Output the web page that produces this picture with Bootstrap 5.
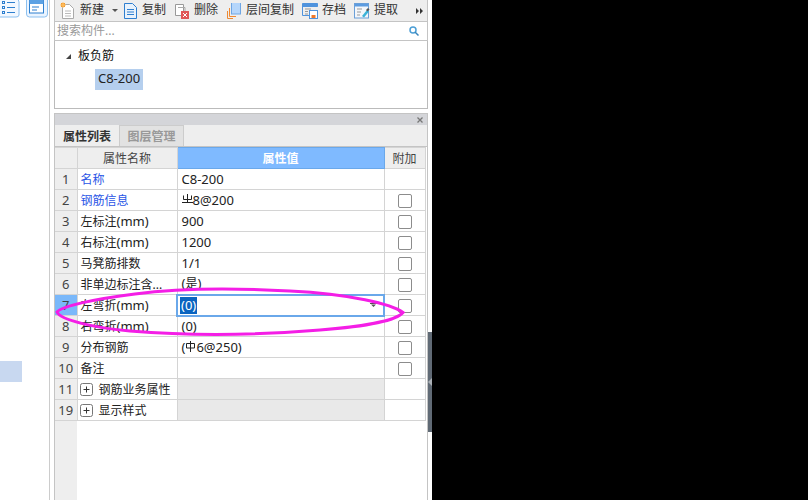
<!DOCTYPE html>
<html lang="zh"><head><meta charset="utf-8"><title>属性列表</title>
<link href="https://cdn.jsdelivr.net/npm/bootstrap@5.3.0/dist/css/bootstrap.min.css" rel="stylesheet">
<style>
html,body{height:500px;overflow:hidden}
body{background:#000;font-family:"Noto Sans","Noto Sans CJK SC",sans-serif;font-size:12px;color:#222;line-height:1.2}
.shell{width:432px;height:500px;background:#fff;position:relative;overflow:hidden}
.leftpane{width:50px;border-right:1px solid #ccc;flex:none}
.lefticons{gap:6px;height:18px}
.ticon{height:18px;display:block;flex:none}
.leftsel{width:22px;height:21px;background:#c8d8f0;margin-top:343px}
.mainp{width:374px;margin-left:4px;flex:none}
.toolb{height:22px;background:#eee;border:1px solid #c4c4c4;border-width:0 1px 1px;padding-left:5px}
.tbtn{font-size:12px;color:#333;white-space:nowrap}
.tbtn svg{display:block;flex:none}
.searchb{height:19px;border:1px solid #c4c4c4;border-width:0 1px 1px;padding:0 8px 0 2px;color:#999;font-size:12px}
.treeb{height:68px;border:1px solid #bbb;border-width:0 1px 1px;padding:0 0 0 10px}
.treerow{height:28px;gap:6px;font-size:12px;color:#111;padding-top:2px}
.treesel{margin-left:30px;width:48px;height:21px;background:#b5cfee;font-size:13px;color:#222;padding-bottom:1px}
.propp{margin-top:4px;border:1px solid #c4c4c4;border-bottom:0;height:388px;position:relative}
.titleb{height:11px;background:#d4d5d9;justify-content:flex-end;padding-right:4px}
.tabsb{height:22px;background:#eee;border-bottom:1px solid #c4c4c4}
.tabon{width:64px;font-weight:700;font-size:12px;color:#333;padding-top:3px}
.taboff{width:65px;background:#e2e2e2;border:1px solid #ccc;border-bottom:0;color:#999;font-weight:700;padding-top:3px}
.gutterbg{position:absolute;left:0;top:33px;bottom:0;width:22px;background:#eee}
.ptable{position:relative;table-layout:fixed;border-collapse:collapse;width:370px;font-size:12px}
.ptable td,.ptable th{height:21px;padding:1px 3px 0;border:1px solid #d4d4d4;vertical-align:middle;white-space:nowrap;overflow:hidden;font-weight:400;color:#222}
.ptable tr>:first-child{border-left:0}
.ptable thead th{background:#eee;text-align:center;color:#444;padding-top:2px}
.ptable thead th.valh{background:#7fbaff;border:1px solid #6aa8ea;color:#fff;font-weight:700}
.ptable td.gut{background:#eee;text-align:center;font-size:13px;color:#444;padding:1px 0 0}
.ptable td.gutcur{background:#7ab8fa}
.ptable td.namec{padding-left:3px;padding-top:2px}
.ptable td.groupc{padding-left:2px}
.ptable td.blue{color:#2a55e6}
.ptable td.val{font-size:13px;color:#222;padding-left:4px}
.ptable td.grey{background:#e9e9e9}
.ptable td.chk{text-align:center;padding:1px 0 0}
.cbx{display:block;width:14px;height:14px;margin:0 auto;border:1px solid #8c8c8c;border-radius:2px;background:#fff;float:none;appearance:none}
.ptable td.edit{padding:0;border:2px solid #6aa8ea}
.editin{height:17px;padding-left:2px;justify-content:space-between;padding-right:6px}
.seltx{background:#0a64c0;color:#fff;font-size:13px;line-height:17px;padding:0 1px}
.plusb{width:13px;height:13px;margin:0 6px 0 0;flex:none;display:block}
.rebar{display:inline-block;vertical-align:0;width:11px;height:11px}
.cjk12{font-size:12px}
.lat13{font-size:13px}
.scrollgrip{position:absolute;left:428px;top:332px;width:4px;height:100px;background:#606a75}
.gripdot{position:absolute;left:428px;top:378px}
.loop{position:absolute;left:0;top:0;pointer-events:none}
</style></head>
<body>
<div class="shell d-flex">
  <div class="leftpane">
    <div class="lefticons d-flex">
      <svg class="ticon" width="20" viewBox="0 0 20 18"><path d="M0 -1h16q3 0 3 3v13q0 2-3 2H0" fill="#f2f8ff" stroke="#8cc0ef"/><g fill="none" stroke="#2d7fcf"><rect x="2.500" y="1.500" width="2" height="2"/><rect x="2.500" y="6.500" width="2" height="2"/><rect x="2.500" y="11.500" width="2" height="2"/><path d="M7 2.500h8M7 7.500h8M7 12.500h8"/></g></svg>
      <svg class="ticon" width="22" viewBox="0 0 22 18"><rect x=".5" y="-3" width="21" height="20" rx="3" fill="#eaf4ff" stroke="#8cc0ef"/><rect x="3.500" y="-1" width="14" height="14" fill="#fff" stroke="#2d7fcf"/><rect x="3.500" y="-1" width="14" height="5" fill="#5da2e4"/><path d="M6 7h7M6 10h5" stroke="#2d7fcf"/></svg>
    </div>
    <div class="leftsel"></div>
  </div>
  <div class="mainp">
    <div class="toolb d-flex align-items-center">
      <div class="tbtn d-flex align-items-center"><svg width="16" height="18" viewBox="0 0 16 18"><path d="M2.500 2.500h7l4 4v10h-11z" fill="#fff" stroke="#aaa"/><path d="M5 9h6M5 11.500h6M5 14h6" stroke="#bbb"/><path d="M1 1h4v4H1z" fill="#f39a2d"/><path d="M0 3h6M3 0v6" stroke="#ffc56f"/></svg><span class="ms-1">新建</span><svg class="ms-2" width="6" height="4" viewBox="0 0 6 4"><path d="M0 0h6L3 3z" fill="#555"/></svg></div>
      <div class="tbtn d-flex align-items-center" style="margin-left:6px"><svg width="13" height="16" viewBox="0 0 13 16"><path d="M.5.500h8l4 4v11h-12z" fill="#e8f2fc" stroke="#2f7fd0"/><path d="M3 6.500h7M3 9h7M3 11.500h7" stroke="#2f7fd0"/></svg><span style="margin-left:5px">复制</span></div>
      <div class="tbtn d-flex align-items-center" style="margin-left:9px"><svg width="15" height="16" viewBox="0 0 15 16"><path d="M.5 1.500h8v11H.5z" fill="#fff" stroke="#999"/><path d="M3 4.500h7v10" fill="none" stroke="#aaa"/><rect x="6" y="8" width="8" height="8" fill="#e05757"/><path d="M8 10l4 4M12 10l-4 4" stroke="#fff"/></svg><span style="margin-left:4px">删除</span></div>
      <div class="tbtn d-flex align-items-center" style="margin-left:9px"><svg width="14" height="16" viewBox="0 0 14 16"><rect x="4.500" y="-1" width="9" height="12" fill="#b5d6fb" stroke="#6ea6e4"/><path d="M2.500 5v8.500H9M.5 8v7.500H6" fill="none" stroke="#ee8a34"/></svg><span style="margin-left:5px">层间复制</span></div>
      <div class="tbtn d-flex align-items-center" style="margin-left:8px"><svg width="16" height="16" viewBox="0 0 16 16"><path d="M.5.500h15v3H.5z" fill="#4f93dd" stroke="#4f93dd"/><path d="M.5 3v9.500H7" fill="none" stroke="#4f93dd"/><path d="M3 6h6M3 8.500h3M3 11h3" stroke="#999"/><rect x="7.500" y="7.500" width="8" height="8" fill="#fff" stroke="#4f93dd"/><rect x="9.500" y="12" width="4" height="3" fill="#f0782a"/></svg><span style="margin-left:4px">存档</span></div>
      <div class="tbtn d-flex align-items-center" style="margin-left:8px"><svg width="16" height="16" viewBox="0 0 16 16"><rect x=".5" y=".500" width="14" height="14.500" fill="#f3f6fa" stroke="#6a9fd8"/><rect x="1" y="1" width="13" height="2.500" fill="#5c9be0"/><path d="M3 6h5M3 9h4M3 12h3" stroke="#999"/><path d="M8 13l5-6 2 1.500-5 6z" fill="#3bb3d8"/><path d="M12 7l2-2 1.500 1.500-2 2z" fill="#555"/></svg><span style="margin-left:4px">提取</span></div>
      <svg class="ms-auto" style="margin-right:4px" width="7" height="6" viewBox="0 0 7 6"><path d="M0 0l3 3-3 3zM4 0l3 3-3 3z" fill="#333"/></svg>
    </div>
    <div class="searchb d-flex align-items-center justify-content-between"><span>搜索构件...</span><svg width="10" height="10" viewBox="0 0 10 10"><circle cx="4" cy="4" r="3" fill="none" stroke="#4d9fd6" stroke-width="1.500"/><path d="M6 6l3.500 3.500" stroke="#3a86bd" stroke-width="1.500"/></svg></div>
    <div class="treeb">
      <div class="treerow d-flex align-items-center"><svg width="7" height="7" viewBox="0 0 7 7"><path d="M6 1v5H1z" fill="#444"/></svg><span class="cjk12">板负筋</span></div>
      <div class="treesel d-flex align-items-center justify-content-center">C8-200</div>
    </div>
    <div class="propp">
      <div class="titleb d-flex align-items-center"><svg width="6" height="6" viewBox="0 0 6 6"><path d="M.5.500l5 5M5.500.500l-5 5" stroke="#777" stroke-width="1.300"/></svg></div>
      <div class="tabsb d-flex"><div class="tabon d-flex align-items-center justify-content-center">属性列表</div><div class="taboff d-flex align-items-center justify-content-center">图层管理</div></div>
      <div class="gutterbg"></div>
      <table class="ptable">
        <colgroup><col style="width:22px"><col style="width:100px"><col style="width:207px"><col style="width:41px"></colgroup>
        <thead><tr><th></th><th>属性名称</th><th class="valh">属性值</th><th>附加</th></tr></thead>
        <tbody>
          <tr><td class="gut">1</td><td class="namec blue">名称</td><td class="val">C8-200</td><td class="chk"></td></tr>
          <tr><td class="gut">2</td><td class="namec blue">钢筋信息</td><td class="val"><svg class="rebar" viewBox="0 0 11 11"><path d="M5.500 0v8M1.500 1.500v4h8v-4M0 8.500h11" fill="none" stroke="#222"/></svg>8@200</td><td class="chk"><input class="cbx" type="checkbox" aria-label="附加"></td></tr>
          <tr><td class="gut">3</td><td class="namec">左标注<span class="lat13">(mm)</span></td><td class="val">900</td><td class="chk"><input class="cbx" type="checkbox" aria-label="附加"></td></tr>
          <tr><td class="gut">4</td><td class="namec">右标注<span class="lat13">(mm)</span></td><td class="val">1200</td><td class="chk"><input class="cbx" type="checkbox" aria-label="附加"></td></tr>
          <tr><td class="gut">5</td><td class="namec">马凳筋排数</td><td class="val">1/1</td><td class="chk"><input class="cbx" type="checkbox" aria-label="附加"></td></tr>
          <tr><td class="gut">6</td><td class="namec">非单边标注含...</td><td class="val">(<span class="cjk12">是</span>)</td><td class="chk"><input class="cbx" type="checkbox" aria-label="附加"></td></tr>
          <tr><td class="gut gutcur">7</td><td class="namec">左弯折<span class="lat13">(mm)</span></td><td class="edit"><div class="editin d-flex align-items-center"><span class="seltx">(0)</span><svg width="7" height="5" viewBox="0 0 7 5"><path d="M0 0h7v1H0zM1 1.500h5L3.500 4z" fill="#555"/></svg></div></td><td class="chk"><input class="cbx" type="checkbox" aria-label="附加"></td></tr>
          <tr><td class="gut">8</td><td class="namec">右弯折<span class="lat13">(mm)</span></td><td class="val">(0)</td><td class="chk"><input class="cbx" type="checkbox" aria-label="附加"></td></tr>
          <tr><td class="gut">9</td><td class="namec">分布钢筋</td><td class="val">(<svg class="rebar" viewBox="0 0 11 11"><path d="M5.500 0v11M1.500 2.500v4.500h8V2.500z" fill="none" stroke="#222"/></svg>6@250)</td><td class="chk"><input class="cbx" type="checkbox" aria-label="附加"></td></tr>
          <tr><td class="gut">10</td><td class="namec">备注</td><td class="val"></td><td class="chk"><input class="cbx" type="checkbox" aria-label="附加"></td></tr>
          <tr><td class="gut">11</td><td class="namec groupc"><div class="d-flex align-items-center"><svg class="plusb" viewBox="0 0 13 13"><rect x=".5" y=".500" width="12" height="12" rx="2" fill="#fff" stroke="#777"/><path d="M3.500 6.500h6M6.500 3.500v6" stroke="#333"/></svg>钢筋业务属性</div></td><td class="grey"></td><td class="chk"></td></tr>
          <tr><td class="gut">19</td><td class="namec groupc"><div class="d-flex align-items-center"><svg class="plusb" viewBox="0 0 13 13"><rect x=".5" y=".500" width="12" height="12" rx="2" fill="#fff" stroke="#777"/><path d="M3.500 6.500h6M6.500 3.500v6" stroke="#333"/></svg>显示样式</div></td><td class="grey"></td><td class="chk"></td></tr>
        </tbody>
      </table>
    </div>
  </div>
  <div class="scrollgrip"></div>
  <svg class="gripdot" width="4" height="8" viewBox="0 0 4 8"><path d="M0 4l4-4v8z" fill="#aab0b6"/></svg>
  <svg class="loop" width="432" height="500" viewBox="0 0 432 500"><path d="M403 312.500C392 304 350 294 290 291C235 288 180 288 135 294C95 299 62 306 57 312C60 320 95 328 130 331C190 336 260 335 320 330C360 327 396 321 403 312.500Z" fill="none" stroke="#f41ee6" stroke-width="3"/></svg>
</div>
<script src="https://cdn.jsdelivr.net/npm/bootstrap@5.3.0/dist/js/bootstrap.bundle.min.js"></script>
</body></html>
